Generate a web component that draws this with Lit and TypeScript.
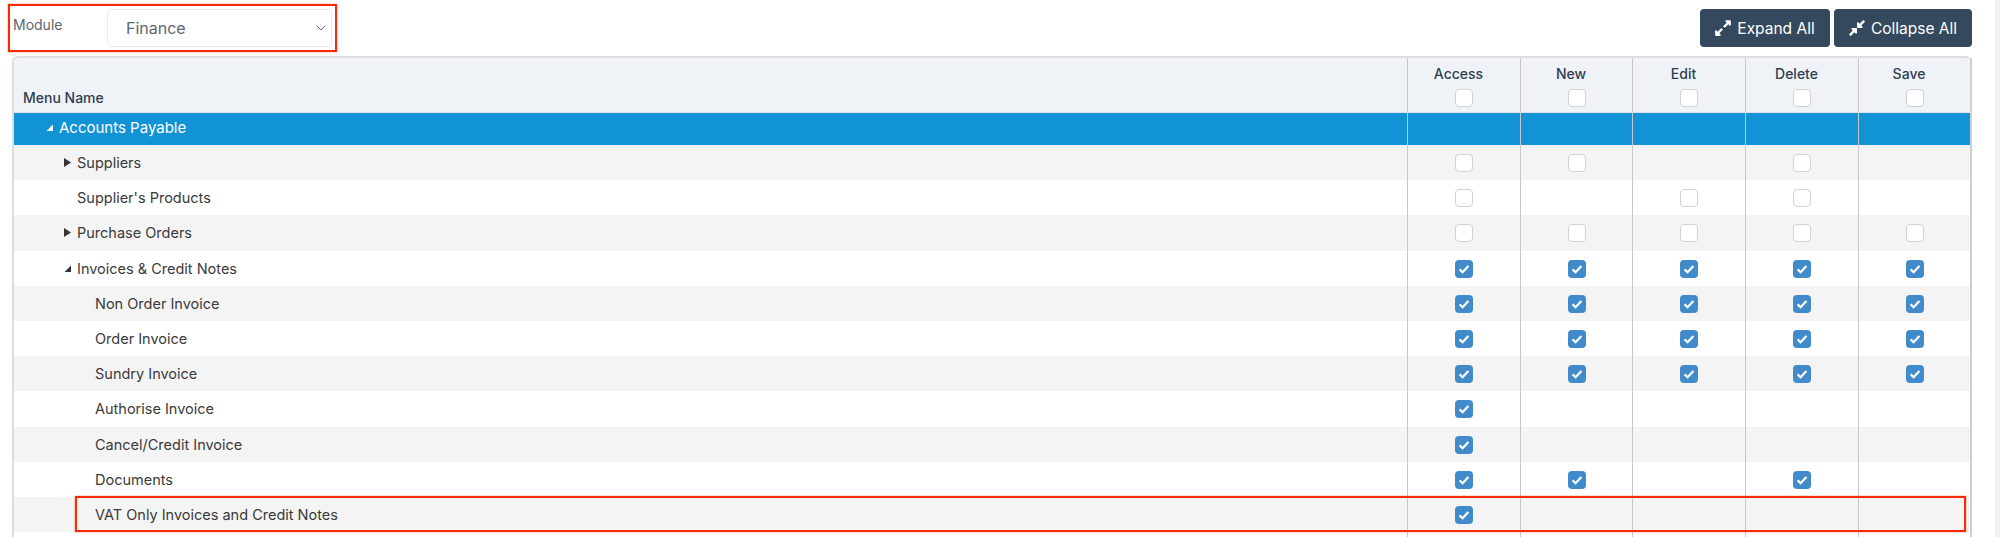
import { LitElement, css, html, nothing, svg } from 'lit';
import { customElement } from 'lit/decorators.js';

type Cell = 0 | 1 | null;
interface Row {
    name: string;
    level: number;
    arrow?: 'open' | 'closed';
    cells: Cell[];
    outlined?: boolean;
}

const ALL_ON: Cell[] = [1, 1, 1, 1, 1];
const NONE: Cell[] = [null, null, null, null, null];

const ROWS: Row[] = [
    { name: 'Suppliers', level: 1, arrow: 'closed', cells: [0, 0, null, 0, null] },
    { name: "Supplier's Products", level: 1, cells: [0, null, 0, 0, null] },
    { name: 'Purchase Orders', level: 1, arrow: 'closed', cells: [0, 0, 0, 0, 0] },
    { name: 'Invoices & Credit Notes', level: 1, arrow: 'open', cells: ALL_ON },
    { name: 'Non Order Invoice', level: 2, cells: ALL_ON },
    { name: 'Order Invoice', level: 2, cells: ALL_ON },
    { name: 'Sundry Invoice', level: 2, cells: ALL_ON },
    { name: 'Authorise Invoice', level: 2, cells: [1, null, null, null, null] },
    { name: 'Cancel/Credit Invoice', level: 2, cells: [1, null, null, null, null] },
    { name: 'Documents', level: 2, cells: [1, 1, null, 1, null] },
    { name: 'VAT Only Invoices and Credit Notes', level: 2, cells: [1, null, null, null, null], outlined: true },
    // the next row is cut off by the window, only its column lines show
    { name: '', level: 2, cells: NONE },
];

const COLUMNS = ['Access', 'New', 'Edit', 'Delete', 'Save'];

const EXPAND = 'M212.686 315.314L120 408l32.922 31.029c15.12 15.12 4.412 40.971-16.97 40.971h-112C10.697 480 0 469.255 0 456V344c0-21.382 25.803-32.09 40.922-16.971L72 360l92.686-92.686c6.248-6.248 16.379-6.248 22.627 0l25.373 25.373c6.249 6.248 6.249 16.378 0 22.627zm22.628-118.628L328 104l-32.922-31.029C279.958 57.851 290.666 32 312.048 32h112C437.303 32 448 42.745 448 56v112c0 21.382-25.803 32.09-40.922 16.971L376 152l-92.686 92.686c-6.248 6.248-16.379 6.248-22.627 0l-25.373-25.373c-6.249-6.248-6.249-16.378 0-22.627z';
const COMPRESS = 'M4.686 427.314L104 328l-32.922-31.029C55.958 281.851 66.666 256 88.048 256h112C213.303 256 224 266.745 224 280v112c0 21.382-25.803 32.09-40.922 16.971L152 376l-99.314 99.314c-6.248 6.248-16.379 6.248-22.627 0L4.686 449.941c-6.248-6.248-6.248-16.379 0-22.627zM443.314 84.686L344 184l32.922 31.029c15.12 15.12 4.412 40.971-16.97 40.971h-112C234.697 256 224 245.255 224 232V120c0-21.382 25.803-32.09 40.922-16.971L296 136l99.314-99.314c6.248-6.248 16.379-6.248 22.627 0l25.373 25.373c6.248 6.248 6.248 16.379 0 22.627z';

@customElement('app-root')
export class AppRoot extends LitElement {
    static styles = css`
      :host {
        display: block;
        height: 537px;
        overflow: hidden;
        font-family: Inter, "Liberation Sans", sans-serif;
        font-size: 14.5px;
        color: #3a3a3a;
        background: #fff;
      }

      .page {
        box-sizing: border-box;
        height: 537px;
        overflow: hidden;
        padding: 4px 23px 0 12px;
        border-right: 5px solid #f1f1f4;
      }

      .toolbar {
        display: flex;
        justify-content: space-between;
        align-items: flex-start;
        height: 52px;
      }

      .module {
        box-sizing: border-box;
        display: flex;
        width: 329px;
        height: 48px;
        margin-left: -4px;
        padding: 3px;
        border: 2px solid #fb2a06;
        box-shadow: 0 0 1px #fb2a06;
      }

      .module label {
        width: 94px;
        padding-top: 7px;
        font-size: 14px;
        color: #5c6670;
      }

      .select {
        box-sizing: border-box;
        flex: 1;
        display: flex;
        align-items: center;
        justify-content: space-between;
        height: 38px;
        padding: 0 4px 0 18px;
        border: 1px solid #e8ebee;
        border-radius: 4px;
        font-size: 16px;
        color: #5c6670;
      }

      .buttons {
        display: flex;
        gap: 4px;
        padding-top: 5px;
      }

      .btn {
        box-sizing: border-box;
        display: flex;
        align-items: center;
        justify-content: center;
        gap: 6px;
        height: 38px;
        border-radius: 4px;
        background: #34495e;
        color: #fff;
        font-size: 15.5px;
      }

      .btn.expand { width: 130px; }
      .btn.collapse { width: 138px; }

      table {
        width: 1960px;
        table-layout: fixed;
        border-collapse: separate;
        border-spacing: 0;
        border-left: 2px solid #dcdde1;
        border-top: 2px solid #dcdde1;
        border-radius: 6px 6px 0 0;
      }

      th {
        box-sizing: border-box;
        height: 55px;
        padding: 0;
        background: #eff3f8;
        border-bottom: 1px solid #dfe2e6;
        border-left: 1px solid #c8c8c8;
        font-weight: 500;
        font-size: 14px;
        color: #2f3e51;
        vertical-align: top;
      }

      th:last-child, td:last-child {
        border-right: 2px solid #cfcfcf;
      }

      th.name {
        border-left: 0;
        border-top-left-radius: 5px;
        text-align: left;
        vertical-align: bottom;
        padding: 0 0 6px 9px;
      }

      th .title {
        display: block;
        height: 31px;
        padding-right: 11px;
        line-height: 31px;
      }

      td {
        box-sizing: border-box;
        height: 35.2px;
        padding: 1px 0 0;
        border-left: 1px solid #c8c8c8;
      }

      td.name {
        padding: 0;
        border-left: 0;
      }

      tbody tr.odd td {
        background: #f4f4f4;
      }

      tr.head-row td {
        height: 32px;
        background: #1293d6;
        color: #fff;
      }

      tr.head-row .label {
        padding-bottom: 3px;
        box-sizing: border-box;
        font-size: 15px;
      }

      .label {
        position: relative;
        display: flex;
        align-items: center;
        height: 100%;
      }

      .arrow {
        width: 7px;
        height: 9px;
        margin-right: 6px;
        flex: none;
      }

      .outline {
        position: absolute;
        z-index: 1;
        box-sizing: border-box;
        left: 61px;
        top: -1px;
        width: 1891px;
        height: 36px;
        border: 2px solid #fb2a06;
        box-shadow: 0 0 1px #fb2a06;
        pointer-events: none;
      }

      .box {
        box-sizing: border-box;
        display: block;
        width: 18px;
        height: 18px;
        margin: 0 auto;
        border: 1px solid #d0d3d6;
        border-radius: 4px;
        background: #fff;
      }

      .box.on {
        border: 0;
        background: #428bca;
      }

      .box svg {
        display: block;
      }
    `;

    private box(on: boolean) {
        return html`<span class="box ${on ? 'on' : ''}">${on
            ? html`<svg width="18" height="18" viewBox="0 0 18 18"><path d="M4.6 9.4l3 2.9 5.8-6.2" fill="none" stroke="#fff" stroke-width="2.2"/></svg>`
            : nothing}</span>`;
    }

    private arrow(kind: 'open' | 'closed', color: string) {
        const shape = kind === 'open'
            ? svg`<path d="M0.5 8h6.5V1.5z" fill=${color}/>`
            : svg`<path d="M0 0l7 4.5L0 9z" fill=${color}/>`;
        return html`<svg class="arrow" viewBox="0 0 7 9">${shape}</svg>`;
    }

    private row(r: Row, i: number) {
        // text sits at a fixed indent, the arrow hangs to the left of it
        const left = 45 + r.level * 18 - (r.arrow ? 13 : 0);
        return html`
            <tr class="${i % 2 === 0 ? 'odd' : ''}">
                <td class="name">
                    <div class="label" style="padding-left:${left}px">
                        ${r.arrow ? this.arrow(r.arrow, '#333') : nothing}${r.name}
                        ${r.outlined ? html`<div class="outline"></div>` : nothing}
                    </div>
                </td>
                ${r.cells.map((c) => html`<td>${c === null ? nothing : this.box(c === 1)}</td>`)}
            </tr>
        `;
    }

    render() {
        return html`
            <div class="page">
                <div class="toolbar">
                    <div class="module">
                        <label>Module</label>
                        <div class="select">
                            Finance
                            <svg width="12" height="8" viewBox="0 0 12 8"><path d="M1.5 1.5L6 6l4.5-4.5" fill="none" stroke="#5c6670" stroke-width="1"/></svg>
                        </div>
                    </div>
                    <div class="buttons">
                        <div class="btn expand">
                            <svg width="16" height="18" viewBox="0 0 448 512"><path d=${EXPAND} fill="#fff"/></svg>
                            Expand All
                        </div>
                        <div class="btn collapse">
                            <svg width="16" height="18" viewBox="0 0 448 512"><path d=${COMPRESS} fill="#fff"/></svg>
                            Collapse All
                        </div>
                    </div>
                </div>
                <table>
                    <colgroup>
                        <col />
                        <col style="width:113px" /><col style="width:112px" /><col style="width:113px" /><col style="width:113px" /><col style="width:114px" />
                    </colgroup>
                    <thead>
                        <tr>
                            <th class="name">Menu Name</th>
                            ${COLUMNS.map((c) => html`<th><span class="title">${c}</span>${this.box(false)}</th>`)}
                        </tr>
                    </thead>
                    <tbody>
                        <tr class="head-row">
                            <td class="name">
                                <div class="label" style="padding-left:32px">
                                    ${this.arrow('open', '#fff')}Accounts Payable
                                </div>
                            </td>
                            ${COLUMNS.map(() => html`<td></td>`)}
                        </tr>
                        ${ROWS.map((r, i) => this.row(r, i))}
                    </tbody>
                </table>
            </div>
        `;
    }
}
